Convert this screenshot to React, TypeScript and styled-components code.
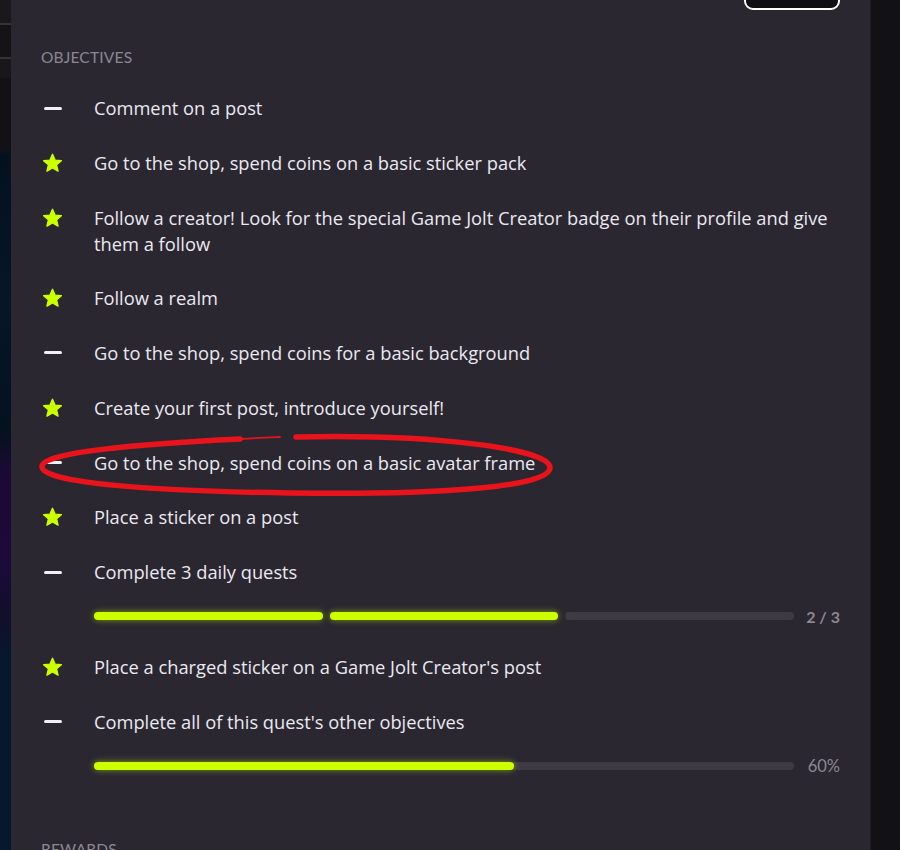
import React from "react";
import styled, { createGlobalStyle } from "styled-components";

const Global = createGlobalStyle`
  html, body { margin: 0; padding: 0; background: #121116; }
  body { font-family: "Open Sans", Lato, "Noto Sans", sans-serif; -webkit-font-smoothing: antialiased; }
  * { box-sizing: border-box; }
`;

const Page = styled.div`
  position: relative;
  display: flex;
  width: 900px;
  height: 850px;
  overflow: hidden;
  background: #121116;
`;

const BackStrip = styled.div`
  width: 11px;
  flex: none;
  background: linear-gradient(
    to bottom,
    #19181c 0px, #19181c 23px, #34323a 23px, #34323a 25px,
    #141316 25px, #141316 57px, #34323a 57px, #34323a 59px,
    #18171b 59px, #18171b 78px, #121115 78px, #121115 150px,
    #04101e 155px, #061628 300px, #04111f 430px,
    #1a0a33 470px, #1c0a3a 560px, #10102a 620px,
    #06182c 660px, #06182c 850px
  );
`;

const Panel = styled.div`
  width: 859px;
  flex: none;
  background: #2a2730;
  padding: 0 30px;
  display: flex;
  flex-direction: column;
`;

const SideGutter = styled.div`
  flex: 1;
  background: #121116;
  border-left: 1px solid #1b1a20;
`;

const TopBar = styled.div`
  height: 10px;
  display: flex;
  justify-content: flex-end;
  align-items: flex-end;
`;

const GhostButton = styled.button`
  flex: none;
  width: 96px;
  height: 40px;
  border: 2px solid #ffffff;
  border-radius: 9px;
  background: #0f0e12;
`;

const SectionLabel = styled.div<{ $top: number }>`
  margin-top: ${(p) => p.$top}px;
  font-family: Lato, "Open Sans", sans-serif;
  font-size: 15.5px;
  line-height: 20px;
  letter-spacing: 0.2px;
  color: #8b8892;
  text-transform: uppercase;
`;

const List = styled.div`
  margin-top: 28.4px;
  display: flex;
  flex-direction: column;
  gap: 29.2px;
`;

const Row = styled.div`
  display: flex;
  align-items: flex-start;
`;

const IconCell = styled.div`
  width: 53px;
  height: 25.6px;
  flex: none;
  display: flex;
  align-items: center;
  padding-left: 1px;
`;

const Dash = styled.span`
  display: block;
  width: 18px;
  height: 3px;
  margin-left: 2px;
  border-radius: 2px;
  background: #f2f0f5;
`;

const Body = styled.div`
  flex: 1;
  display: flex;
  flex-direction: column;
`;

const Text = styled.div`
  font-size: 18.3px;
  line-height: 25.6px;
  color: #ebe9f0;
`;

const ProgressRow = styled.div`
  margin: 27.2px 0 5px;
  height: 8px;
  display: flex;
  align-items: center;
  gap: 12px;
`;

const Track = styled.div`
  flex: 1;
  display: flex;
  gap: 7px;
  height: 8px;
`;

const Segment = styled.div<{ $on: boolean }>`
  flex: 1;
  height: 8px;
  border-radius: 4px;
  background: ${(p) => (p.$on ? "#ccff00" : "#3d3a44")};
  box-shadow: ${(p) => (p.$on ? "0 0 6px rgba(204,255,0,0.55)" : "none")};
`;

const BarTrack = styled.div`
  flex: 1;
  height: 8px;
  border-radius: 4px;
  background: #3d3a44;
  display: flex;
`;

const BarFill = styled.div`
  height: 8px;
  border-radius: 4px;
  background: #ccff00;
  box-shadow: 0 0 6px rgba(204, 255, 0, 0.55);
`;

const ProgressLabel = styled.div<{ $bold?: boolean }>`
  width: 34px;
  flex: none;
  text-align: right;
  font-family: Lato, "Open Sans", sans-serif;
  font-size: ${(p) => (p.$bold ? 16 : 16.5)}px;
  font-weight: ${(p) => (p.$bold ? 700 : 400)};
  color: #8b8892;
  white-space: nowrap;
`;

const Annotation = styled.svg`
  position: absolute;
  left: 0;
  top: 0;
  pointer-events: none;
`;

const Star = () => (
  <svg width="21" height="20" viewBox="0 0 24 23">
    <polygon
      points="12,1.5 14.9,8.2 22.2,8.8 16.7,13.6 18.4,20.8 12,17 5.6,20.8 7.3,13.6 1.8,8.8 9.1,8.2"
      fill="#ccff00"
      stroke="#ccff00"
      strokeWidth="1.6"
      strokeLinejoin="round"
    />
  </svg>
);

type Obj = {
  text: string;
  done: boolean;
  segments?: [number, number];
  percent?: number;
};

const objectives: Obj[] = [
  { text: "Comment on a post", done: false },
  { text: "Go to the shop, spend coins on a basic sticker pack", done: true },
  {
    text: "Follow a creator! Look for the special Game Jolt Creator badge on their profile and give them a follow",
    done: true,
  },
  { text: "Follow a realm", done: true },
  { text: "Go to the shop, spend coins for a basic background", done: false },
  { text: "Create your first post, introduce yourself!", done: true },
  { text: "Go to the shop, spend coins on a basic avatar frame", done: false },
  { text: "Place a sticker on a post", done: true },
  { text: "Complete 3 daily quests", done: false, segments: [2, 3] },
  { text: "Place a charged sticker on a Game Jolt Creator's post", done: true },
  { text: "Complete all of this quest's other objectives", done: false, percent: 60 },
];

export default function App() {
  return (
    <>
      <Global />
      <Page>
        <BackStrip />
        <Panel>
          <TopBar>
            <GhostButton aria-label="action" />
          </TopBar>
          <SectionLabel $top={37}>Objectives</SectionLabel>
          <List>
            {objectives.map((o, i) => (
              <Row key={i}>
                <IconCell>{o.done ? <Star /> : <Dash />}</IconCell>
                <Body>
                  <Text>{o.text}</Text>
                  {o.segments && (
                    <ProgressRow>
                      <Track>
                        {Array.from({ length: o.segments[1] }).map((_, k) => (
                          <Segment key={k} $on={k < o.segments![0]} />
                        ))}
                      </Track>
                      <ProgressLabel $bold>
                        {o.segments[0]} / {o.segments[1]}
                      </ProgressLabel>
                    </ProgressRow>
                  )}
                  {o.percent !== undefined && (
                    <ProgressRow>
                      <BarTrack>
                        <BarFill style={{ width: `${o.percent}%` }} />
                      </BarTrack>
                      <ProgressLabel>{o.percent}%</ProgressLabel>
                    </ProgressRow>
                  )}
                </Body>
              </Row>
            ))}
          </List>
          <SectionLabel $top={64}>Rewards</SectionLabel>
        </Panel>
        <SideGutter />
        <Annotation width="900" height="850" viewBox="0 0 900 850">
          <path
            d="M 296 437 C 430 434, 551 448, 550 468 C 549 488, 430 495, 290 493 C 150 491, 40 483, 42 466 C 44 452, 140 444, 240 439"
            fill="none"
            stroke="#e8131b"
            strokeWidth="5.5"
            strokeLinecap="round"
          />
          <path
            d="M 240 439 C 255 438, 268 437.5, 280 437"
            fill="none"
            stroke="#e8131b"
            strokeWidth="1.8"
            strokeLinecap="round"
          />
        </Annotation>
      </Page>
    </>
  );
}
